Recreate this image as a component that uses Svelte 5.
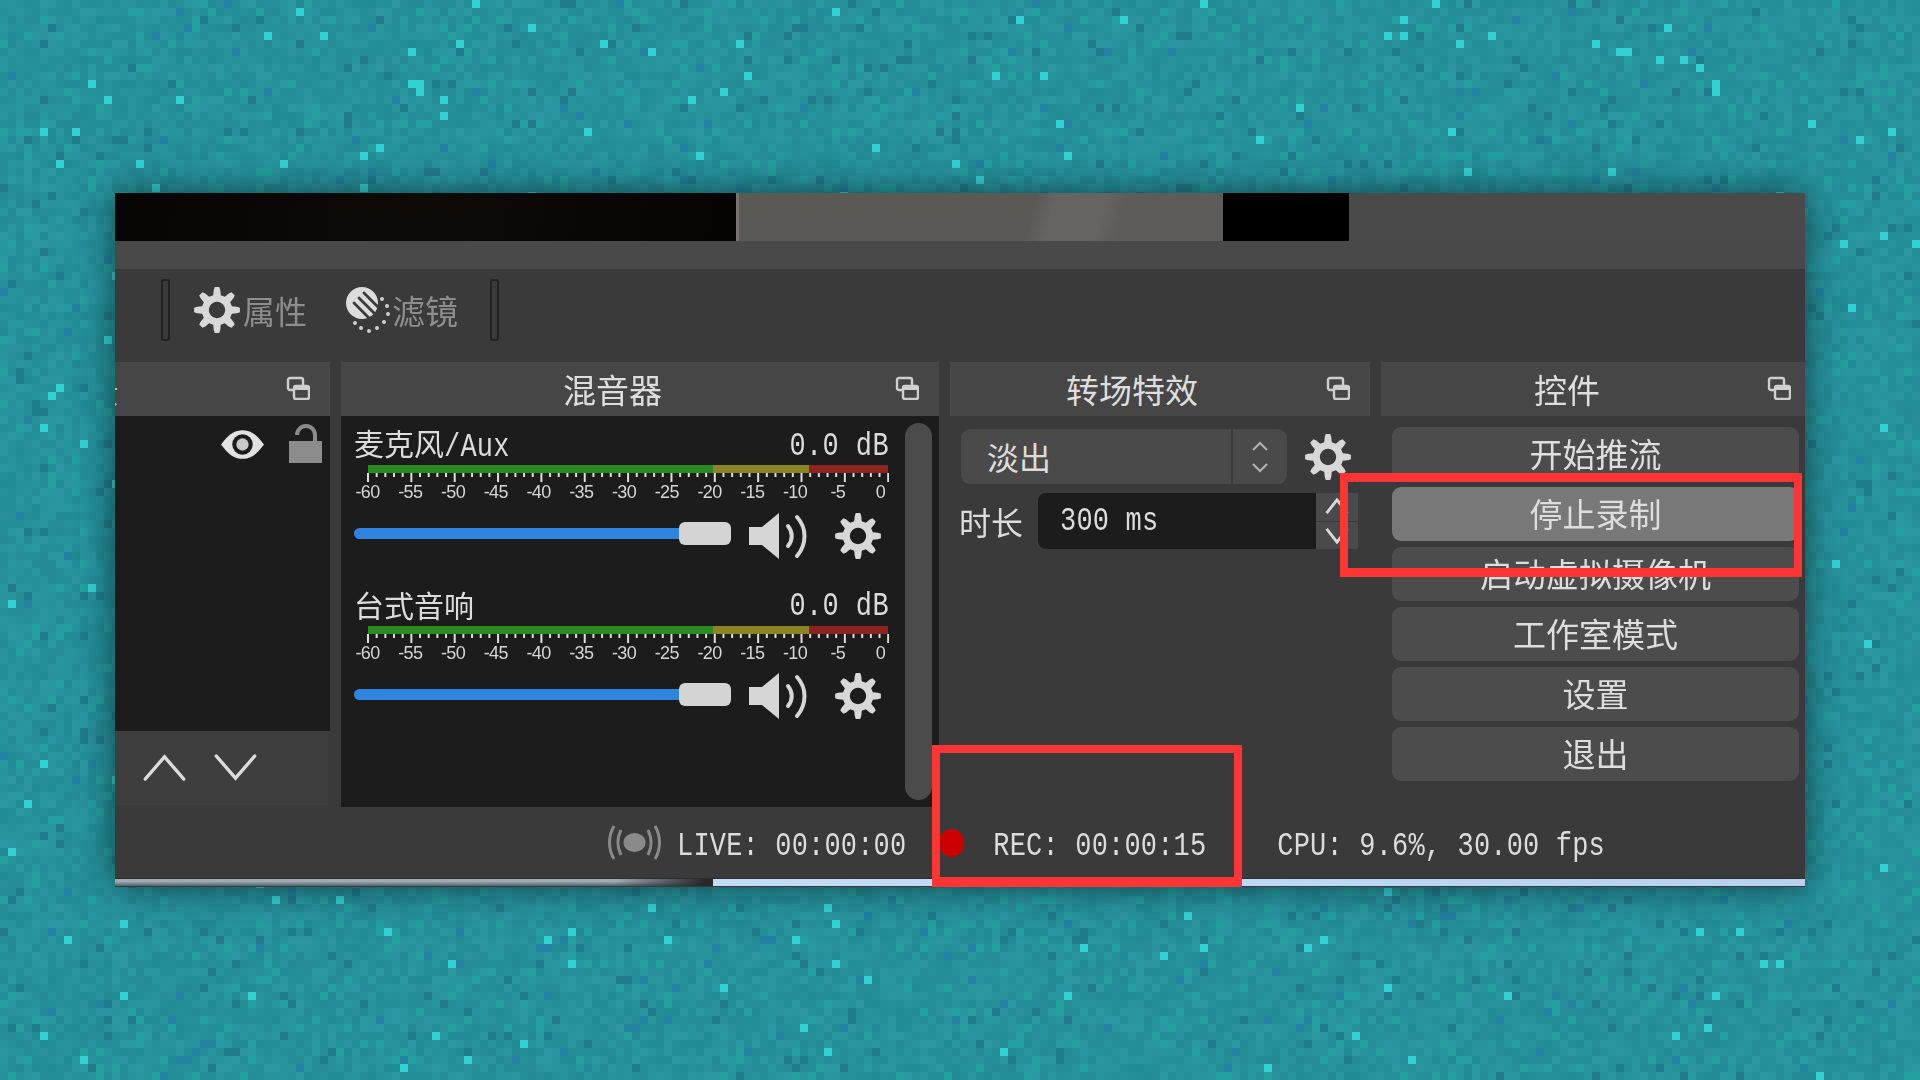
<script>
  import { onMount } from 'svelte';

  const channels = [{ name: '麦克风', suffix: '/Aux' }, { name: '台式音响', suffix: '' }];
  const scale = ['-60', '-55', '-50', '-45', '-40', '-35', '-30', '-25', '-20', '-15', '-10', '-5', '0'];
  const buttons = ['开始推流', '停止录制', '启动虚拟摄像机', '工作室模式', '设置', '退出'];
  const ticks = Array.from({ length: 61 }, (_, i) => i);

  function gearPath(teeth = 8) {
    const pts = [];
    const step = (Math.PI * 2) / teeth;
    for (let i = 0; i < teeth; i++) {
      const a = i * step - Math.PI / 2;
      const spots = [[-0.3, 16], [-0.2, 21], [-0.12, 24], [0.12, 24], [0.2, 21], [0.3, 16]];
      for (const [o, r] of spots) {
        const t = a + o * step * 1.05;
        pts.push(`${(24 + r * Math.cos(t)).toFixed(2)} ${(24 + r * Math.sin(t)).toFixed(2)}`);
      }
    }
    return `M${pts.join('L')}Z M24 15.5a8.5 8.5 0 1 0 .01 0Z`;
  }
  const gear = gearPath();

  let canvas;
  onMount(() => {
    // seeded noise so the mosaic stays the same on every load
    let seed = 4711;
    const rnd = () => {
      seed = (seed * 16807) % 2147483647;
      return seed / 2147483647;
    };
    const ctx = canvas.getContext('2d');
    for (let y = 0; y < 135; y++) {
      for (let x = 0; x < 240; x++) {
        const r = rnd();
        const k = (rnd() - 0.5) * 14;
        let c = [38 + k * 0.6, 145 + k, 155 + k];
        if (r > 0.992) c = [50, 210, 212];
        else if (r > 0.98) c = [34, 130, 160];
        else if (r > 0.93) c = [36, 160, 160];
        else if (r < 0.03) c = [32, 124, 140];
        ctx.fillStyle = `rgb(${c.map(Math.round).join(',')})`;
        ctx.fillRect(x * 8, y * 8, 8, 8);
      }
    }
  });
</script>

{#snippet floatIcon()}
  <svg class="float" viewBox="0 0 24 24">
    <rect x="2" y="2" width="15" height="12" rx="2" />
    <rect x="8" y="10" width="15" height="13" rx="2" fill="#464646" />
    <rect x="8" y="10" width="15" height="4" fill="#cfcfcf" stroke="none" />
  </svg>
{/snippet}

{#snippet gearIcon(cls)}
  <svg class={cls} viewBox="0 0 48 48"><path d={gear} fill-rule="evenodd" fill="#d8d8d8" /></svg>
{/snippet}

<div class="page">
  <canvas class="mosaic" bind:this={canvas} width="1920" height="1080"></canvas>

  <div class="window">
    <div class="preview">
      <div class="pv-black"></div>
      <div class="pv-gray"></div>
      <div class="pv-black2"></div>
    </div>
    <div class="band"></div>

    <div class="toolbar">
      <span class="sep"></span>
      {@render gearIcon('tool-gear')}
      <span class="tool-label">属性</span>
      <svg class="tool-filter" viewBox="0 0 45 46">
        <circle cx="17" cy="16" r="16" fill="#dcdcdc" />
        <g stroke="#3a3a3a" stroke-width="2.8" stroke-linecap="round">
          <path d="M19 6L36 23" />
          <path d="M14 11L31 28" />
          <path d="M9 16L26 33" />
        </g>
        <g fill="#d0d0d0">
          <circle cx="37" cy="12" r="2" /><circle cx="42" cy="19" r="2" /><circle cx="43" cy="27" r="2" />
          <circle cx="39" cy="35" r="2" /><circle cx="32" cy="41" r="2" /><circle cx="24" cy="44" r="2" />
          <circle cx="16" cy="41" r="2" /><circle cx="10" cy="36" r="2" />
        </g>
      </svg>
      <span class="tool-label filter">滤镜</span>
      <span class="sep second"></span>
    </div>

    <div class="docks">
      <section class="dock scenes">
        <header class="dock-head">
          <span class="clip">景</span>
          {@render floatIcon()}
        </header>
        <div class="list">
          <svg class="eye" viewBox="0 0 44 32">
            <path d="M1 16C9 5 15 2 22 2s13 3 21 14c-8 11-14 14-21 14S9 27 1 16Z" fill="#e2e2e2" />
            <circle cx="22" cy="16" r="10" fill="#1c1c1c" />
            <circle cx="22" cy="16" r="6" fill="#c8c8c8" />
          </svg>
          <svg class="lock" viewBox="0 0 33 39">
            <path d="M26 18V11a9 9 0 0 0-18 0" fill="none" stroke="#8c8c8c" stroke-width="4" />
            <rect x="0" y="17" width="33" height="22" fill="#8c8c8c" />
          </svg>
        </div>
        <div class="list-tools">
          <svg class="arrow" viewBox="0 0 46 30"><path d="M3 27L23 4L43 27" /></svg>
          <svg class="arrow" viewBox="0 0 46 30"><path d="M3 3L23 26L43 3" /></svg>
        </div>
      </section>

      <section class="dock mixer">
        <header class="dock-head">
          <h2>混音器</h2>
          {@render floatIcon()}
        </header>
        <div class="mixer-body">
          <div class="channels">
            {#each channels as ch}
              <div class="channel">
                <div class="ch-head">
                  <span class="ch-name">{ch.name}<span class="mono">{ch.suffix}</span></span>
                  <span class="mono db">0.0 dB</span>
                </div>
                <div class="meter">
                  <span class="m-green"></span><span class="m-yellow"></span><span class="m-red"></span>
                </div>
                <svg class="ticks" viewBox="0 0 522 10">
                  {#each ticks as t}
                    <rect x={t * 8.67} y="0" width="2" height={t % 5 === 0 ? 9 : 4} fill="#dedede" />
                  {/each}
                </svg>
                <div class="scale">
                  {#each scale as s}
                    <span class="scale-item"><span>{s}</span></span>
                  {/each}
                </div>
                <div class="fader">
                  <span class="track"></span>
                  <span class="handle"></span>
                  <svg class="speaker" viewBox="0 0 60 46">
                    <path d="M0 14H13L30 0V46L13 32H0Z" fill="#d6d6d6" />
                    <path d="M39 13C44 19 44 27 39 33" class="wave" />
                    <path d="M48 4C58 15 58 31 48 43" class="wave" />
                  </svg>
                  {@render gearIcon('fader-gear')}
                </div>
              </div>
            {/each}
          </div>
          <div class="scrollbar"></div>
        </div>
      </section>

      <section class="dock transitions">
        <header class="dock-head">
          <h2>转场特效</h2>
          {@render floatIcon()}
        </header>
        <div class="combo-row">
          <div class="combo">
            <span class="combo-text">淡出</span>
            <span class="combo-spin">
              <svg viewBox="0 0 18 32"><path d="M2 9L9 2L16 9M2 23L9 30L16 23" /></svg>
            </span>
          </div>
          {@render gearIcon('combo-gear')}
        </div>
        <div class="duration-row">
          <span class="duration-label">时长</span>
          <div class="duration-input"><span class="mono">300 ms</span></div>
          <div class="spin">
            <span><svg viewBox="0 0 26 18"><path d="M2 16L13 2L24 16" /></svg></span>
            <span><svg viewBox="0 0 26 18"><path d="M2 2L13 16L24 2" /></svg></span>
          </div>
        </div>
      </section>

      <section class="dock controls">
        <header class="dock-head">
          <h2>控件</h2>
          {@render floatIcon()}
        </header>
        <div class="button-list">
          {#each buttons as label, i}
            <button class:active={i === 1}>{label}</button>
          {/each}
        </div>
      </section>
    </div>

    <footer class="status">
      <svg class="live" viewBox="0 0 53 37">
        <ellipse cx="26.5" cy="18.5" rx="11" ry="9.5" fill="#8a8a8a" />
        <g fill="none" stroke="#8a8a8a" stroke-width="3">
          <path d="M13 6C9 14 9 23 13 31" />
          <path d="M6 2C0 12 0 25 6 35" />
          <path d="M40 6C44 14 44 23 40 31" />
          <path d="M47 2C53 12 53 25 47 35" />
        </g>
      </svg>
      <span class="mono st-live">LIVE: 00:00:00</span>
      <span class="rec-dot"></span>
      <span class="mono st-rec">REC: 00:00:15</span>
      <span class="mono st-cpu">CPU: 9.6%, 30.00 fps</span>
    </footer>
    <div class="edge"></div>

    <div class="mark mark-stop"></div>
    <div class="mark mark-rec"></div>
  </div>
</div>

<style>
  :global(body) {
    margin: 0;
    background: #24929c;
  }

  .page {
    position: relative;
    width: 1920px;
    height: 1080px;
    overflow: hidden;
    padding: 193px 0 0 115px;
    box-sizing: border-box;
    font-family: 'Noto Sans CJK SC', 'Liberation Sans', sans-serif;
    color: #dcdcdc;
  }

  .mosaic {
    position: absolute;
    inset: 0;
  }

  .window {
    position: relative;
    width: 1690px;
    height: 694px;
    background: #3a3a3a;
    box-shadow: 0 0 34px rgba(0, 0, 0, 0.55);
    display: flex;
    flex-direction: column;
  }

  .preview {
    height: 48px;
    background: #4a4a4a;
    display: flex;
    flex: none;
  }

  .pv-black {
    width: 621px;
    background: linear-gradient(100deg, #070504, #0d0a07 50%, #060403);
    border-right: 3px solid #77736e;
  }

  .pv-gray {
    width: 484px;
    background: linear-gradient(105deg, #5b5956 0 60%, #666462 64% 74%, #5e5c5a 78%);
  }

  .pv-black2 {
    width: 126px;
    background: #000;
  }

  .band {
    height: 28px;
    background: #494949;
    flex: none;
  }

  .toolbar {
    height: 93px;
    flex: none;
    display: flex;
    align-items: center;
    padding: 0 0 11px 46px;
    box-sizing: border-box;
  }

  .sep {
    width: 5px;
    height: 58px;
    border: 2px solid #222;
    border-radius: 3px;
    flex: none;
  }

  .sep.second {
    margin-left: 32px;
  }

  :global(.tool-gear) {
    width: 46px;
    height: 46px;
    margin-left: 24px;
    flex: none;
  }

  .tool-label {
    font-size: 32px;
    line-height: 1;
    color: #8e8e8e;
    margin-left: 3px;
    width: 64px;
    flex: none;
    white-space: nowrap;
  }

  .tool-filter {
    width: 45px;
    height: 46px;
    margin-left: 38px;
    flex: none;
  }

  .tool-label.filter {
    margin-left: 2px;
    width: 66px;
    font-size: 33px;
  }

  .docks {
    height: 445px;
    flex: none;
    display: flex;
  }

  .dock {
    display: flex;
    flex-direction: column;
    flex: none;
    position: relative;
  }

  .dock-head {
    height: 54px;
    flex: none;
    background: #464646;
    display: flex;
    align-items: center;
    position: relative;
    overflow: hidden;
  }

  .dock-head h2 {
    margin: 0;
    font-size: 33px;
    line-height: 1;
    font-weight: 400;
    color: #dedede;
    white-space: nowrap;
  }

  :global(.float) {
    position: absolute;
    right: 20px;
    top: 14px;
    width: 24px;
    height: 24px;
    fill: none;
    stroke: #cfcfcf;
    stroke-width: 2.4;
  }

  .scenes {
    width: 215px;
    margin-right: 11px;
  }

  .clip {
    position: absolute;
    left: -28px;
    top: 11px;
    font-size: 32px;
    line-height: 1;
    color: #e0b080;
  }

  .list {
    height: 315px;
    background: #1c1c1c;
    display: flex;
    justify-content: flex-end;
    align-items: flex-start;
    padding: 8px 8px 0 0;
    box-sizing: border-box;
  }

  .eye {
    width: 45px;
    height: 33px;
    margin: 4px 24px 0 0;
  }

  .lock {
    width: 33px;
    height: 39px;
  }

  .list-tools {
    height: 74px;
    margin-right: 2px;
    background: #3e3e3e;
    display: flex;
    align-items: flex-start;
    gap: 26px;
    padding: 22px 0 0 27px;
    box-sizing: border-box;
  }

  .arrow {
    width: 45px;
    height: 29px;
    fill: none;
    stroke: #dcdcdc;
    stroke-width: 3.4;
    stroke-linecap: round;
  }

  .mixer {
    width: 598px;
    margin-right: 11px;
  }

  .mixer h2 {
    margin-left: 222px;
  }

  .mixer-body {
    flex: 1;
    background: #1c1c1c;
    display: flex;
  }

  .channels {
    width: 564px;
    flex: none;
    padding: 10px 0 0 13px;
    box-sizing: border-box;
    display: grid;
    grid-auto-rows: 132px;
    row-gap: 28.5px;
  }

  .channel {
    width: 535px;
  }

  .ch-head {
    height: 36px;
    display: flex;
    justify-content: space-between;
    align-items: center;
  }

  .ch-name {
    font-size: 30px;
    line-height: 36px;
    color: #dcdcdc;
    white-space: nowrap;
    margin-top: -2px;
  }

  .mono {
    font-family: 'Liberation Mono', monospace;
    font-size: 27px;
    letter-spacing: 0.18px;
    line-height: 1;
    display: inline-block;
    transform: scaleY(1.2);
    color: #dcdcdc;
    white-space: pre;
  }

  .db {
    margin-top: 6px;
    word-spacing: 0;
    letter-spacing: 0.4px;
  }

  .meter {
    height: 8px;
    margin: 3px 0 0 13.5px;
    display: flex;
  }

  .m-green { width: 345.5px; background: #2c8a22; }
  .m-yellow { width: 96px; background: #8c8424; }
  .m-red { width: 79px; background: #8c2420; }

  .ticks {
    display: block;
    width: 522px;
    height: 10px;
    margin-left: 13px;
  }

  .scale {
    height: 16px;
    margin: 1px 0 1px 13.5px;
    width: 513px;
    display: flex;
    justify-content: space-between;
  }

  .scale-item {
    width: 0;
    display: flex;
    justify-content: center;
    font-family: 'Liberation Sans', sans-serif;
    font-size: 18px;
    line-height: 16px;
    color: #d6d6d6;
    letter-spacing: -0.7px;
  }

  .fader {
    height: 45px;
    margin-top: 13px;
    display: flex;
    align-items: center;
  }

  .track {
    width: 325px;
    height: 11px;
    background: #2d85e0;
    border-radius: 6px 0 0 6px;
    margin-top: -4px;
    flex: none;
  }

  .handle {
    width: 52px;
    height: 23px;
    background: #d4d4d4;
    border-radius: 6px;
    margin-top: -4px;
    flex: none;
  }

  .speaker {
    width: 60px;
    height: 46px;
    margin-left: 18px;
    flex: none;
  }

  .wave {
    fill: none;
    stroke: #d6d6d6;
    stroke-width: 4;
    stroke-linecap: round;
  }

  :global(.fader-gear) {
    width: 46px;
    height: 46px;
    margin-left: 26px;
    flex: none;
  }

  .scrollbar {
    width: 27px;
    margin: 7px 0;
    background: #4b4b4b;
    border-radius: 14px;
    flex: none;
  }

  .transitions {
    width: 420px;
    margin-right: 11px;
  }

  .transitions h2 {
    margin-left: 116px;
  }

  .combo-row {
    display: flex;
    align-items: center;
    margin: 13px 0 0 11px;
    height: 55px;
  }

  .combo {
    width: 326px;
    height: 55px;
    background: #4a4a4a;
    border-radius: 9px;
    display: flex;
    align-items: center;
    flex: none;
  }

  .combo-text {
    width: 270px;
    padding: 0 0 2px 26px;
    box-sizing: border-box;
    font-size: 32px;
    line-height: 1;
    flex: none;
  }

  .combo-spin {
    flex: 1;
    height: 100%;
    border-left: 2px solid #3a3a3a;
    display: flex;
    align-items: center;
    justify-content: center;
  }

  .combo-spin svg {
    width: 18px;
    height: 32px;
    fill: none;
    stroke: #b4b4b4;
    stroke-width: 2;
  }

  :global(.combo-gear) {
    width: 46px;
    height: 46px;
    margin-left: 18px;
    flex: none;
  }

  .duration-row {
    display: flex;
    align-items: stretch;
    height: 56px;
    margin: 9px 0 0 9px;
  }

  .duration-label {
    width: 79px;
    font-size: 32px;
    line-height: 56px;
    flex: none;
    white-space: nowrap;
  }

  .duration-input {
    width: 278px;
    background: #1c1c1c;
    border-radius: 8px 0 0 8px;
    display: flex;
    align-items: center;
    padding: 3px 0 0 22px;
    box-sizing: border-box;
    flex: none;
  }

  .spin {
    width: 42px;
    display: grid;
    grid-template-rows: 1fr 1fr;
    gap: 1px;
    flex: none;
  }

  .spin span {
    background: #4a4a4a;
    display: flex;
    align-items: center;
    justify-content: center;
  }

  .spin svg {
    width: 26px;
    height: 17px;
    fill: none;
    stroke: #dadada;
    stroke-width: 3;
  }

  .controls {
    width: 424px;
  }

  .controls h2 {
    margin-left: 153px;
  }

  :global(.controls .float) {
    right: 14px;
  }

  .button-list {
    display: grid;
    grid-auto-rows: 54px;
    row-gap: 6px;
    padding: 11px 6px 0 11px;
  }

  button {
    border: 0;
    margin: 0;
    padding: 0 0 1px;
    background: #4c4c4c;
    border-radius: 9px;
    color: #dedede;
    font-family: inherit;
    font-size: 33px;
    line-height: 1;
  }

  button.active {
    background: #787878;
  }

  .status {
    height: 71px;
    flex: none;
    display: flex;
    align-items: center;
    padding: 0 0 0 493px;
    box-sizing: border-box;
  }

  .live {
    width: 53px;
    height: 37px;
    flex: none;
  }

  .status .mono {
    margin-top: 10px;
  }

  .st-live { margin-left: 16px; }
  .st-rec { margin-left: 29px; }
  .st-cpu { margin-left: 71px; }

  .rec-dot {
    width: 25px;
    height: 28px;
    border-radius: 50%;
    background: #cc0000;
    margin-left: 33px;
    flex: none;
  }

  .edge {
    height: 8px;
    flex: none;
    border-top: 1px solid #2e2e2e;
    box-sizing: border-box;
    background:
      linear-gradient(90deg, #c4dcf6 0, #b8d2ee 100%) 598px 0 / 1092px 100% no-repeat,
      linear-gradient(90deg, transparent 0 500px, #26282a 590px) 0 0 / 598px 100% no-repeat,
      linear-gradient(180deg, #a0aab4 0 35%, #50606e 100%);
  }

  .mark {
    position: absolute;
    border: solid #ff3535;
    box-sizing: border-box;
  }

  .mark-stop {
    left: 1225px;
    top: 280px;
    width: 462px;
    height: 104px;
    border-width: 9px 8px 9px 8px;
  }

  .mark-rec {
    left: 817px;
    top: 552px;
    width: 310px;
    height: 142px;
    border-width: 8px 8px 10px 8px;
  }
</style>
